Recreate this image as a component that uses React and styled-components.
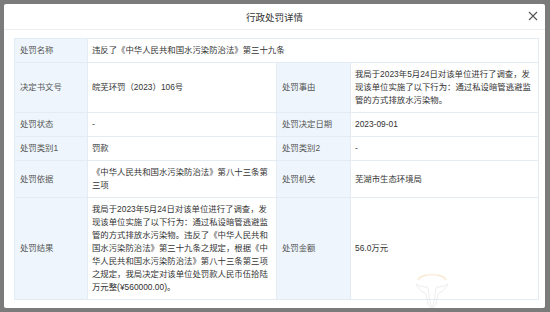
import React from "react";
import styled, { createGlobalStyle } from "styled-components";

const GlobalStyle = createGlobalStyle`
  html, body {
    margin: 0;
    padding: 0;
    height: 312px;
    overflow: hidden;
    background: #7b7b7b;
  }
  #root {
    height: 312px;
  }
`;

const Overlay = styled.div`
  display: flex;
  height: 312px;
  padding: 4px 5px 4px 4px;
  box-sizing: border-box;
  font-family: "Liberation Sans", "Noto Sans CJK SC", sans-serif;
`;

const Modal = styled.div`
  position: relative;
  flex: 1;
  display: flex;
  flex-direction: column;
  background: #fff;
  border-radius: 2px;
  overflow: hidden;
`;

const Header = styled.div`
  position: relative;
  display: flex;
  align-items: center;
  justify-content: center;
  height: 25px;
  border-bottom: 1px solid #eceef0;
  color: #333;
  font-size: 9.5px;
`;

const CloseButton = styled.button`
  position: absolute;
  right: 7px;
  top: 7px;
  display: flex;
  padding: 0;
  border: 0;
  background: none;
  cursor: pointer;
`;

const Body = styled.div`
  padding: 8px 6px 7px 10px;
`;

const Grid = styled.div`
  display: grid;
  grid-template-columns: 72px 188px 73px 187px;
  gap: 1px;
  background: #e3ebf3;
  border: 1px solid #e3ebf3;
  font-size: 8.4px;
  line-height: 13px;
`;

const Cell = styled.div`
  display: flex;
  align-items: center;
  padding: ${(p) => (p.$label ? "5px 5px" : "5px 3px 5px 4px")};
  background: ${(p) => (p.$label ? "#eef5fc" : "#fff")};
  color: ${(p) => (p.$label ? "#555" : "#333")};
  grid-column: ${(p) => (p.$span ? `span ${p.$span}` : "auto")};
`;

const Watermark = styled.svg`
  position: absolute;
  left: 408px;
  top: 268px;
  opacity: 0.45;
  pointer-events: none;
`;

const rows = [
  [["处罚名称", "违反了《中华人民共和国水污染防治法》第三十九条", 3]],
  [
    ["决定书文号", "皖芜环罚（2023）106号"],
    [
      "处罚事由",
      "我局于2023年5月24日对该单位进行了调查，发现该单位实施了以下行为：通过私设暗管逃避监管的方式排放水污染物。",
    ],
  ],
  [
    ["处罚状态", "-"],
    ["处罚决定日期", "2023-09-01"],
  ],
  [
    ["处罚类别1", "罚款"],
    ["处罚类别2", "-"],
  ],
  [
    ["处罚依据", "《中华人民共和国水污染防治法》第八十三条第三项"],
    ["处罚机关", "芜湖市生态环境局"],
  ],
  [
    [
      "处罚结果",
      "我局于2023年5月24日对该单位进行了调查，发现该单位实施了以下行为：通过私设暗管逃避监管的方式排放水污染物。违反了《中华人民共和国水污染防治法》第三十九条之规定，根据《中华人民共和国水污染防治法》第八十三条第三项之规定，我局决定对该单位处罚款人民币伍拾陆万元整(¥560000.00)。",
    ],
    ["处罚金额", "56.0万元"],
  ],
];

const App = () => {
  return (
    <>
      <GlobalStyle />
      <Overlay>
        <Modal>
          <Header>
            行政处罚详情
            <CloseButton aria-label="关闭">
              <svg width="10" height="10" viewBox="0 0 10 10">
                <path
                  d="M1 1L9 9M9 1L1 9"
                  stroke="#555"
                  strokeWidth="1.1"
                  fill="none"
                />
              </svg>
            </CloseButton>
          </Header>
          <Body>
            <Grid>
              {rows.map((row) =>
                row.map(([label, value, span]) => (
                  <React.Fragment key={label}>
                    <Cell $label>{label}</Cell>
                    <Cell $span={span}>{value}</Cell>
                  </React.Fragment>
                ))
              )}
            </Grid>
          </Body>
          <Watermark width="40" height="40" viewBox="0 0 40 40">
            <path
              d="M6 8 C8 1 32 1 34 8"
              stroke="#f0c98a"
              strokeWidth="1.2"
              fill="none"
            />
            <path
              d="M4 12 C10 16 14 14 16 16 L18 30 L20 36 L22 30 L24 16 C26 14 30 16 36 12 C32 20 28 20 26 22 L24 32 L20 38 L16 32 L14 22 C12 20 8 20 4 12Z"
              stroke="#d8d8d8"
              strokeWidth="1"
              fill="none"
            />
          </Watermark>
        </Modal>
      </Overlay>
    </>
  );
};

export default App;
